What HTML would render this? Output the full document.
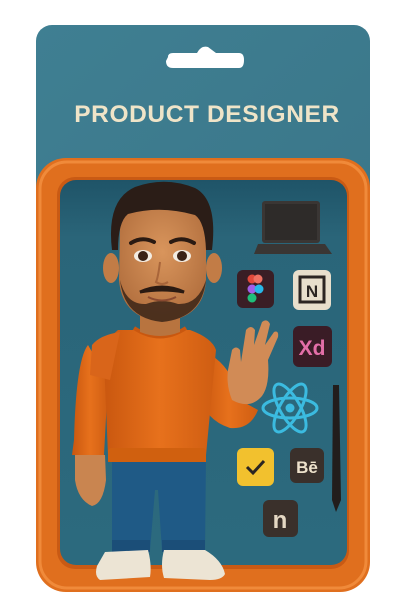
<!DOCTYPE html>
<html><head><meta charset="utf-8"><style>
html,body{margin:0;padding:0;background:#fff;width:408px;height:612px;overflow:hidden}
svg{display:block}
</style></head><body>
<svg width="408" height="612" viewBox="0 0 408 612" xmlns="http://www.w3.org/2000/svg">
<defs>
<linearGradient id="card" x1="0" y1="0" x2="1" y2="1"><stop offset="0" stop-color="#3f7f92"/><stop offset="1" stop-color="#3a7588"/></linearGradient>
<linearGradient id="inner" x1="0" y1="0" x2="0" y2="1"><stop offset="0" stop-color="#1f5468"/><stop offset="0.15" stop-color="#2a6579"/><stop offset="1" stop-color="#2c6a7e"/></linearGradient>
<radialGradient id="skin" cx="0.5" cy="0.4" r="0.6"><stop offset="0" stop-color="#d9955c"/><stop offset="1" stop-color="#b26f3e"/></radialGradient>
<linearGradient id="sw" x1="0" y1="0" x2="1" y2="0"><stop offset="0" stop-color="#c9570f"/><stop offset="0.5" stop-color="#e7711c"/><stop offset="1" stop-color="#cf5d12"/></linearGradient>
</defs>
<!-- card -->
<rect x="36" y="25" width="334" height="300" rx="16" fill="url(#card)"/>
<path d="M168 57 Q168 53 173 53 L197 53 Q201 45 208 47 L216 53 L239 53 Q244 53 244 60 Q244 68 239 68 L173 68 Q166 68 166 61 Z" fill="#fff"/>
<text x="207" y="122" text-anchor="middle" font-family="Liberation Sans, sans-serif" font-weight="bold" font-size="24.5" fill="#efe4c8" letter-spacing="0.6">PRODUCT DESIGNER</text>
<!-- frame -->
<rect x="36" y="158" width="334" height="434" rx="30" fill="#e06f1e"/>
<rect x="40" y="162" width="326" height="426" rx="27" fill="none" stroke="#f08a3a" stroke-width="3"/>
<rect x="57" y="177" width="292" height="392" rx="18" fill="#c95a14"/>
<rect x="60" y="180" width="287" height="385" rx="16" fill="url(#inner)"/>
<!-- laptop -->
<rect x="262" y="201" width="58" height="42" rx="3" fill="#3a3634"/>
<rect x="265" y="204" width="52" height="36" fill="#2e2b29"/>
<path d="M258 244 L325 244 L332 254 L254 254 Z" fill="#3a3634"/>
<!-- figma -->
<rect x="237" y="270" width="37" height="38" rx="6" fill="#3a1e25"/>
<circle cx="252" cy="279" r="4.5" fill="#e2493b"/><circle cx="258" cy="279" r="4.5" fill="#ef7162"/>
<circle cx="252" cy="289" r="4.5" fill="#a35ee8"/><circle cx="259" cy="289" r="4.5" fill="#27b8e8"/>
<circle cx="252" cy="298" r="4.5" fill="#1fbf7a"/>
<!-- notion -->
<rect x="293" y="270" width="38" height="40" rx="6" fill="#e8dfcc"/>
<rect x="300" y="277" width="24" height="25" fill="#e8dfcc" stroke="#2b2522" stroke-width="3"/>
<text x="312" y="297" text-anchor="middle" font-family="Liberation Sans, sans-serif" font-weight="bold" font-size="17" fill="#2b2522">N</text>
<!-- xd -->
<rect x="293" y="326" width="39" height="41" rx="6" fill="#3a1c26"/>
<text x="312" y="355" text-anchor="middle" font-family="Liberation Sans, sans-serif" font-weight="bold" font-size="21" fill="#e36fa8">Xd</text>
<!-- react -->
<g fill="none" stroke="#3bbbe0" stroke-width="3" transform="translate(290,408)">
<ellipse rx="27" ry="10"/><ellipse rx="27" ry="10" transform="rotate(60)"/><ellipse rx="27" ry="10" transform="rotate(-60)"/>
</g><circle cx="290" cy="408" r="4.5" fill="#3bbbe0"/>
<!-- pen -->
<path d="M333 385 L339 385 L341 500 L336 512 L332 500 Z" fill="#221d1c"/>
<!-- check -->
<rect x="237" y="448" width="37" height="38" rx="6" fill="#f2c12e"/>
<path d="M247 467 L253 473 L264 461" fill="none" stroke="#2b2522" stroke-width="3"/>
<!-- Be -->
<rect x="290" y="448" width="34" height="35" rx="6" fill="#3a302b"/>
<text x="307" y="473" text-anchor="middle" font-family="Liberation Sans, sans-serif" font-weight="bold" font-size="17" fill="#eee2cc">Bē</text>
<!-- n -->
<rect x="263" y="500" width="35" height="37" rx="6" fill="#3a302b"/>
<text x="280" y="528" text-anchor="middle" font-family="Liberation Sans, sans-serif" font-weight="bold" font-size="24" fill="#e5d8c4">n</text>

<!-- figure: raised arm -->
<path d="M200 350 Q230 360 240 400 L258 410 Q250 430 230 428 Q205 420 200 395 Z" fill="url(#sw)"/>
<path d="M232 400 Q226 385 228 370 L232 350 Q236 345 240 350 L241 362 L246 330 Q251 324 255 330 L254 345 L262 322 Q267 318 270 324 L265 345 L274 332 Q279 330 278 337 L268 360 Q270 385 262 396 Q250 410 232 400 Z" fill="#d18b56"/>
<!-- left arm -->
<path d="M88 345 Q76 360 74 440 L72 455 L104 455 L108 380 Z" fill="url(#sw)"/>
<path d="M75 455 L105 455 L106 480 Q103 504 92 506 Q78 500 75 480 Z" fill="#c98550"/>
<!-- jeans -->
<path d="M112 455 L206 455 L205 550 L162 550 L158 490 L155 490 L150 550 L112 550 Z" fill="#1f5a86"/>
<path d="M112 540 L150 540 L150 552 L112 552 Z M162 540 L205 540 L205 552 L162 552 Z" fill="#1b4e78"/>
<!-- shoes -->
<path d="M105 552 L148 550 Q152 565 150 577 L100 580 Q94 576 97 566 Z" fill="#ece4d4"/>
<path d="M164 550 L205 550 Q222 560 225 574 Q222 580 210 580 L164 578 Q160 565 164 550 Z" fill="#ece4d4"/>
<!-- torso -->
<path d="M118 330 L190 330 Q212 338 216 350 L206 455 L206 462 L108 462 L108 455 L104 360 Q100 345 118 330 Z" fill="url(#sw)"/>
<path d="M92 345 Q100 335 120 332 L110 380 L90 375 Z" fill="#d9651a"/>
<rect x="108" y="448" width="98" height="14" rx="3" fill="#d0600f"/>
<path d="M134 328 Q160 345 186 328" fill="none" stroke="#c9570f" stroke-width="4"/>
<!-- neck -->
<path d="M140 312 L180 312 L180 332 Q160 340 140 332 Z" fill="#b8743f"/>
<!-- ears -->
<ellipse cx="111" cy="268" rx="8" ry="15" fill="#c27c46"/>
<ellipse cx="214" cy="268" rx="8" ry="15" fill="#c27c46"/>
<!-- face -->
<path d="M120 228 Q120 205 162 205 Q206 205 206 228 L206 280 Q204 318 162 322 Q122 318 119 280 Z" fill="url(#skin)"/>
<!-- beard -->
<path d="M120 280 Q124 318 162 322 Q202 318 206 280 Q198 305 178 304 Q162 298 146 304 Q126 305 120 280 Z" fill="#3a2418" opacity="0.85"/>
<path d="M140 292 Q162 282 184 292 Q162 288 140 292 Z" fill="#2a1a12" stroke="#2a1a12" stroke-width="3"/>
<path d="M148 297 Q162 304 176 297" fill="none" stroke="#8a4a30" stroke-width="2"/>
<!-- hair -->
<path d="M112 250 Q106 200 135 187 Q165 176 195 188 Q218 200 212 250 L206 250 Q205 222 195 215 Q160 205 128 214 Q118 222 118 250 Z" fill="#2b1d17"/>
<!-- brows & eyes -->
<path d="M131 243 Q142 236 154 242" fill="none" stroke="#2a1a12" stroke-width="4" stroke-linecap="round"/>
<path d="M171 242 Q182 236 194 243" fill="none" stroke="#2a1a12" stroke-width="4" stroke-linecap="round"/>
<ellipse cx="143" cy="256" rx="9" ry="6" fill="#f3ece2"/><circle cx="143" cy="256" r="5" fill="#3a2216"/>
<ellipse cx="182" cy="256" rx="9" ry="6" fill="#f3ece2"/><circle cx="182" cy="256" r="5" fill="#3a2216"/>
<path d="M160 262 Q158 278 156 282 Q162 286 168 282" fill="none" stroke="#a8653a" stroke-width="2"/>
</svg>
</body></html>
